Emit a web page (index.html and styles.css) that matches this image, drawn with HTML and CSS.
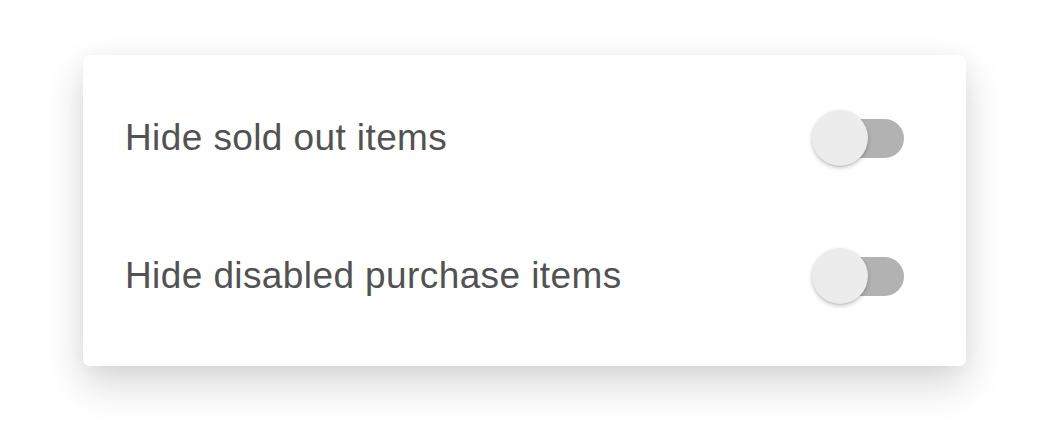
FILE: index.html
```html
<!DOCTYPE html>
<html lang="en">
<head>
<meta charset="utf-8">
<title>Settings</title>
<link rel="stylesheet" href="styles.css">
</head>
<body>
<div class="page">
  <div class="card">
    <div class="row">
      <span class="label">Hide sold out items</span>
      <span class="switch"><span class="track"></span><span class="knob"></span></span>
    </div>
    <div class="row">
      <span class="label">Hide disabled purchase items</span>
      <span class="switch"><span class="track"></span><span class="knob"></span></span>
    </div>
  </div>
</div>
</body>
</html>
```
FILE: styles.css
```css
html, body {
  margin: 0;
  padding: 0;
  background: #ffffff;
}
.page {
  box-sizing: border-box;
  min-height: 422px;
  padding: 55px 83px 56px 83px;
  width: 1049px;
}
.card {
  box-sizing: border-box;
  width: 883px;
  height: 311px;
  padding: 14px 62px 21px 42px;
  background: #ffffff;
  border-radius: 7px;
  box-shadow: 0 18px 40px rgba(0, 0, 0, 0.16), 0 2px 20px rgba(0, 0, 0, 0.04);
  display: flex;
  flex-direction: column;
}
.row {
  height: 138px;
  display: flex;
  align-items: center;
  justify-content: space-between;
}
.label {
  font-family: "Liberation Sans", Arial, sans-serif;
  font-weight: 400;
  font-size: 37px;
  letter-spacing: 0.4px;
  color: #525252;
}
.switch {
  position: relative;
  width: 92px;
  height: 56px;
  display: block;
}
.track {
  position: absolute;
  left: 8px;
  top: 8.5px;
  width: 84px;
  height: 39px;
  border-radius: 20px;
  background: #b2b2b2;
}
.knob {
  position: absolute;
  left: 0;
  top: 0;
  width: 56px;
  height: 56px;
  border-radius: 50%;
  background: #ececec;
  box-shadow: 0 2px 4px rgba(0, 0, 0, 0.22), 0 1px 1px rgba(0, 0, 0, 0.08);
}
```
